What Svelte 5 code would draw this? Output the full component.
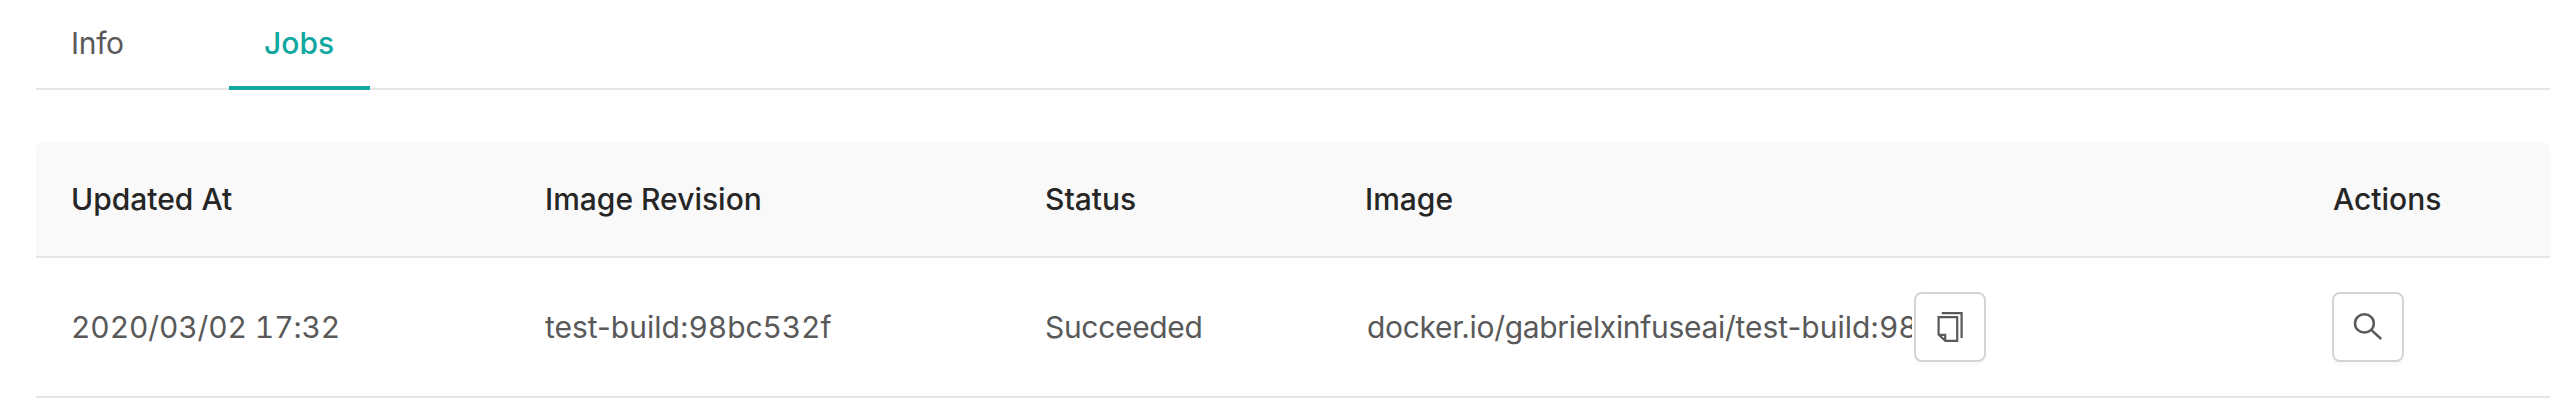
<script>
  const tabs = [
    { label: 'Info', active: false },
    { label: 'Jobs', active: true }
  ];
  const columns = ['Updated At', 'Image Revision', 'Status', 'Image', 'Actions'];
  const jobs = [
    {
      updatedAt: '2020/03/02 17:32',
      name: 'test-build:',
      hash: '98bc532f',
      status: 'Succeeded',
      registry: 'docker.io/gabrielxinfuseai/'
    }
  ];
</script>

<main class="panel">
  <nav class="tabs">
    {#each tabs as tab}
      <span class="tab" class:active={tab.active}>{tab.label}</span>
    {/each}
  </nav>

  <section class="table">
    <div class="row head">
      {#each columns as column}
        <div class="cell">{column}</div>
      {/each}
    </div>
    {#each jobs as job}
      <div class="row body">
        <div class="cell hash">{job.updatedAt}</div>
        <div class="cell"><span class="name">{job.name}</span><span class="hash">{job.hash}</span></div>
        <div class="cell">{job.status}</div>
        <div class="cell image">
          <span class="url">{job.registry}<span class="name">{job.name}</span><span class="hash">{job.hash}</span></span>
          <button class="btn" aria-label="Copy">
            <svg width="50" height="50" viewBox="0 0 50 50" fill="none" stroke="currentColor" stroke-width="2.2">
              <path d="M16.8 11.1H36.6V36" />
              <path d="M13.6 15.1H32.2V38.9H20.4L13.6 32.6Z" />
              <path d="M13.6 32.8H20.2V38.9" />
            </svg>
          </button>
        </div>
        <div class="cell">
          <button class="btn" aria-label="View">
            <svg width="50" height="50" viewBox="0 0 50 50" fill="none" stroke="currentColor" stroke-width="2.5">
              <ellipse cx="21.4" cy="21.4" rx="9.4" ry="9.1" />
              <path d="M28.2 27.8L38.2 37" />
            </svg>
          </button>
        </div>
      </div>
    {/each}
  </section>
</main>

<style>
  :global(body) {
    background: #fff;
  }
  .panel {
    padding: 0 18px 0 36px;
    font-family: Inter, 'Liberation Sans', sans-serif;
    font-size: 30px;
    line-height: 40px;
    color: #595959;
    letter-spacing: -0.32px;
  }
  .tabs {
    display: flex;
    gap: 64px;
    height: 90px;
    box-sizing: border-box;
    border-bottom: 2px solid #e6e6e6;
  }
  .tab {
    box-sizing: border-box;
    height: 90px;
    width: 129px;
    padding: 23px 0 0 35px;
  }
  .tab.active {
    width: 141px;
    color: #11a8a1;
    font-weight: 550;
    letter-spacing: 0;
    border-bottom: 4px solid #11a8a1;
  }
  .table {
    margin-top: 52px;
  }
  .row {
    display: grid;
    grid-template-columns: 474px 500px 320px 967px 1fr;
    align-items: center;
    box-sizing: border-box;
    padding-left: 35px;
    border-bottom: 2px solid #e6e6e6;
  }
  .head {
    height: 116px;
    background: #f9f9f9;
    border-radius: 8px 8px 0 0;
    color: #262626;
    font-weight: 550;
    letter-spacing: 0;
  }
  .head .cell:last-child {
    padding-left: 1px;
  }
  .body {
    height: 140px;
  }
  .name {
    letter-spacing: 0;
  }
  .hash {
    font-feature-settings: 'tnum';
    letter-spacing: -0.13px;
  }
  .image {
    display: flex;
    align-items: center;
    gap: 2px;
    padding-left: 2px;
  }
  .url {
    width: 545px;
    overflow: hidden;
    white-space: nowrap;
  }
  .btn {
    display: flex;
    align-items: center;
    justify-content: center;
    box-sizing: border-box;
    flex: none;
    width: 72px;
    height: 70px;
    padding: 0;
    border: 2px solid #d4d4d4;
    border-radius: 8px;
    background: #fff;
    color: #595959;
    box-shadow: 0 4px 0 rgba(0, 0, 0, 0.015);
  }
</style>
